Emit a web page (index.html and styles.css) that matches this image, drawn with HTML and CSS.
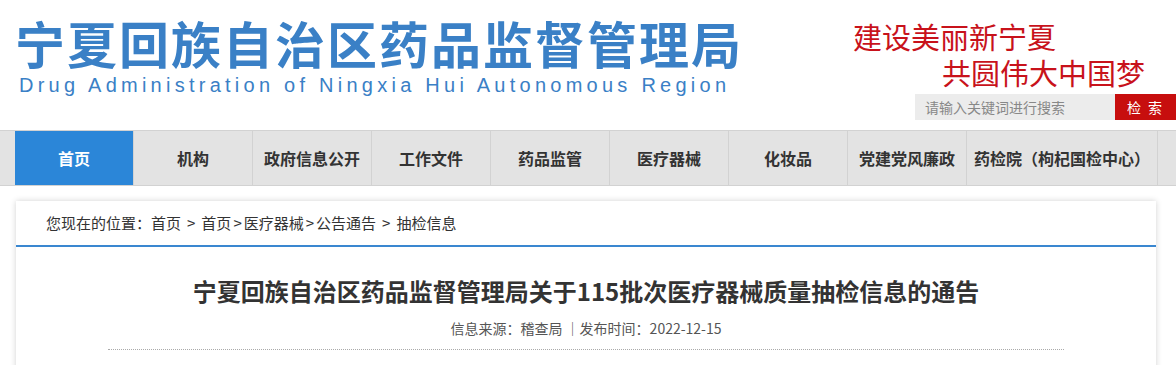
FILE: index.html
```html
<!DOCTYPE html>
<html lang="zh-CN">
<head>
    <meta charset="UTF-8">
    <meta name="viewport" content="width=device-width, initial-scale=1.0">
    <title>宁夏回族自治区药品监督管理局</title>
    <link rel="stylesheet" href="styles.css">
</head>
<body>
    <div class="header">
        <div class="logo">
            <h1>宁夏回族自治区药品监督管理局</h1>
            <p class="logo-en">Drug Administration of Ningxia Hui Autonomous Region</p>
        </div>
        <div class="header-right">
            <p class="slogan slogan-1">建设美丽新宁夏</p>
            <p class="slogan slogan-2">共圆伟大中国梦</p>
            <form class="search">
                <input type="text" placeholder="请输入关键词进行搜索">
                <button type="button">检 索</button>
            </form>
        </div>
    </div>

    <div class="nav">
        <ul>
            <li class="active"><a href="#">首页</a></li>
            <li><a href="#">机构</a></li>
            <li><a href="#">政府信息公开</a></li>
            <li><a href="#">工作文件</a></li>
            <li><a href="#">药品监管</a></li>
            <li><a href="#">医疗器械</a></li>
            <li><a href="#">化妆品</a></li>
            <li><a href="#">党建党风廉政</a></li>
            <li class="wide"><a href="#">药检院（枸杞国检中心）</a></li>
        </ul>
    </div>

    <div class="container">
        <div class="crumbs">
            您现在的位置：<a href="#">首页</a><span class="sep wide-sep">&gt;</span><a href="#">首页</a><span class="sep">&gt;</span><a href="#">医疗器械</a><span class="sep">&gt;</span><a href="#">公告通告</a><span class="sep wide-sep">&gt;</span>抽检信息
        </div>

        <article class="article">
            <h2>宁夏回族自治区药品监督管理局关于115批次医疗器械质量抽检信息的通告</h2>
            <p class="meta">信息来源：稽查局 ｜发布时间：2022-12-15</p>
            <div class="divider"></div>
        </article>
    </div>
</body>
</html>
```

FILE: styles.css
```css
body {
    margin: 0;
    padding: 0;
    font-family: "Noto Sans CJK SC", "Liberation Sans", sans-serif;
    background-color: #fff;
    color: #333;
}

a {
    color: inherit;
    text-decoration: none;
}

.header {
    height: 130px;
    display: flex;
    justify-content: space-between;
}

.logo {
    padding: 16px 0 0 15px;
}

.logo h1 {
    margin: 0;
    font-size: 50px;
    line-height: 52px;
    font-weight: bold;
    letter-spacing: 2px;
    color: #3a80c6;
}

.logo-en {
    margin: 5px 0 0 4px;
    font-family: "Liberation Sans", Arial, sans-serif;
    font-size: 20px;
    line-height: 24px;
    letter-spacing: 4.25px;
    color: #3a80c6;
}

.header-right {
    width: 261px;
    display: flex;
    flex-direction: column;
    align-items: flex-start;
}

.slogan {
    margin: 0;
    font-size: 29px;
    line-height: 36px;
    font-weight: 400;
    color: #c8121b;
    white-space: nowrap;
}

.slogan-1 {
    margin-top: 18px;
    margin-left: -62px;
}

.slogan-2 {
    margin-left: 27px;
}

.search {
    display: flex;
    margin-top: 4px;
}

.search input {
    width: 200px;
    height: 26px;
    box-sizing: border-box;
    border: 0;
    padding: 0 10px;
    background-color: #ececec;
    font-family: inherit;
    font-size: 14px;
    color: #555;
    outline: none;
}

.search input::placeholder {
    color: #888;
}

.search button {
    width: 61px;
    height: 26px;
    border: 0;
    padding: 0;
    background-color: #c70e0e;
    color: #fff;
    font-family: inherit;
    font-size: 14px;
    letter-spacing: 2px;
}

.nav {
    background-color: #e3e3e3;
    border-top: 1px solid #d2d2d2;
    border-bottom: 1px solid #d2d2d2;
}

.nav ul {
    display: flex;
    margin: 0;
    padding: 0 0 0 15px;
    list-style: none;
}

.nav li {
    width: 118px;
    border-right: 1px solid #d2d2d2;
    text-align: center;
}

.nav li.wide {
    width: 190px;
}

.nav li a {
    display: block;
    height: 54px;
    line-height: 54px;
    font-size: 16px;
    font-weight: bold;
    color: #333;
}

.nav li.active {
    background-color: #2b86d8;
}

.nav li.active a {
    color: #fff;
}

.container {
    width: 1140px;
    margin: 15px 0 0 16px;
    background-color: #fff;
    box-shadow: 0 0 6px rgba(0, 0, 0, 0.18);
}

.crumbs {
    height: 44px;
    line-height: 44px;
    padding-left: 30px;
    font-size: 15px;
    color: #333;
    border-bottom: 2px solid #3a87d0;
}

.crumbs .sep {
    margin: 0 2px;
}

.crumbs .wide-sep {
    margin: 0 6px;
}

.article {
    padding: 24px 92px 0;
}

.article h2 {
    margin: 0;
    font-size: 24px;
    line-height: 40px;
    font-weight: bold;
    text-align: center;
    color: #333;
}

.meta {
    margin: 6px 0 0;
    font-size: 14px;
    line-height: 22px;
    text-align: center;
    color: #555;
}

.divider {
    margin-top: 10px;
    border-top: 1px dotted #aaa;
    height: 40px;
}
```
